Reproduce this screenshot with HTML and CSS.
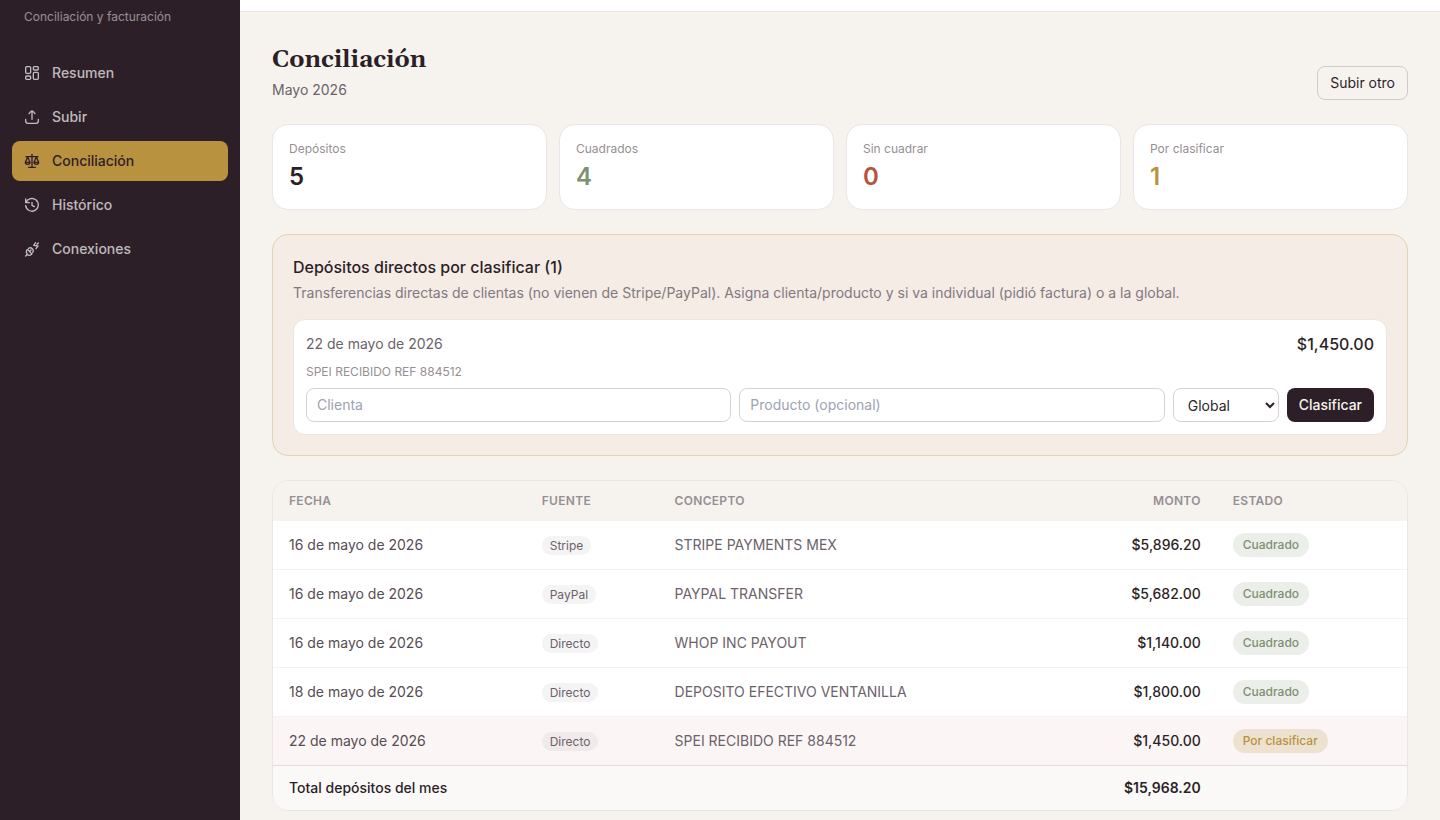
FILE: index.html
```html
<!DOCTYPE html>
<html lang="es">
<head>
<meta charset="utf-8">
<meta name="viewport" content="width=device-width, initial-scale=1">
<title>Conciliación</title>
<link rel="stylesheet" href="styles.css">
</head>
<body>
<div class="app">
  <aside class="sidebar">
    <p class="tagline">Conciliación y facturación</p>
    <nav class="nav">
      <a class="nav-link" href="#resumen"><svg class="icon" viewBox="0 0 24 24"><rect x="2.500" y="2.500" width="7.500" height="10" rx="1.500"/><rect x="2.500" y="16.500" width="7.500" height="5" rx="1.500"/><rect x="14" y="2.500" width="7.500" height="5" rx="1.500"/><rect x="14" y="11" width="7.500" height="10.500" rx="1.500"/></svg>Resumen</a>
      <a class="nav-link" href="#subir"><svg class="icon" viewBox="0 0 24 24"><path d="M12 15.500V3M7.500 7C9 5 11 3 12 3s3 2 4.500 4M2.500 15.500V18c0 2.500 1 3.500 3.500 3.500h12c2.500 0 3.500-1 3.500-3.500v-2.500"/></svg>Subir</a>
      <a class="nav-link nav-link-active" href="#conciliacion" aria-current="page"><svg class="icon" viewBox="0 0 24 24"><path d="M12 2v19M7 21.500h10M3 5.500h18M5.500 6 2 14h7zM18.500 6 15 14h7zM2 14c0 4 7 4 7 0M15 14c0 4 7 4 7 0"/></svg>Conciliación</a>
      <a class="nav-link" href="#historico"><svg class="icon" viewBox="0 0 24 24"><path d="M2.500 3v5.500H8M3 8.500a9.500 9.500 0 1 1-.5 4.500M12 8v4.500l3.500 2"/></svg>Histórico</a>
      <a class="nav-link" href="#conexiones"><svg class="icon" viewBox="0 0 24 24"><path d="M5 12.500l7 7c-2.500 2.500-5.500 2.500-7 .5s-2-5 0-7.500zM5 20l-2.500 2.500M8.500 15.500l2-2M7 11c2-1.500 4-1 5.500.5s2 3.500.5 5.500M17.500 2.500 14.500 6.500l6.500 1-3 4M21.500 3l-2 2"/></svg>Conexiones</a>
    </nav>
  </aside>
  <div class="content">
    <header class="topbar"></header>
    <main class="main">
      <div class="page-head">
        <div>
          <h1 class="page-title">Conciliación</h1>
          <p class="page-sub">Mayo 2026</p>
        </div>
        <button class="btn btn-outline" type="button">Subir otro</button>
      </div>
      <section class="stats" aria-label="Totales">
        <div class="stat"><p class="stat-label">Depósitos</p><p class="stat-value">5</p></div>
        <div class="stat"><p class="stat-label">Cuadrados</p><p class="stat-value value-green">4</p></div>
        <div class="stat"><p class="stat-label">Sin cuadrar</p><p class="stat-value value-red">0</p></div>
        <div class="stat"><p class="stat-label">Por clasificar</p><p class="stat-value value-gold">1</p></div>
      </section>
      <section class="pending">
        <h2 class="pending-title">Depósitos directos por clasificar (1)</h2>
        <p class="pending-text">Transferencias directas de clientas (no vienen de Stripe/PayPal). Asigna clienta/producto y si va individual (pidió factura) o a la global.</p>
        <form class="deposit">
          <div class="deposit-head"><span class="deposit-date">22 de mayo de 2026</span><span class="deposit-amount">$1,450.00</span></div>
          <p class="deposit-ref">SPEI RECIBIDO REF 884512</p>
          <div class="deposit-fields">
            <input class="field" type="text" placeholder="Clienta" aria-label="Clienta">
            <input class="field" type="text" placeholder="Producto (opcional)" aria-label="Producto">
            <select class="select" aria-label="Tipo de factura"><option>Global</option><option>Individual</option></select>
            <button class="btn btn-dark" type="button">Clasificar</button>
          </div>
        </form>
      </section>
      <div class="table-card">
        <table class="table">
          <thead>
            <tr><th>Fecha</th><th>Fuente</th><th>Concepto</th><th class="num">Monto</th><th>Estado</th></tr>
          </thead>
          <tbody>
            <tr><td>16 de mayo de 2026</td><td><span class="tag">Stripe</span></td><td class="concept">STRIPE PAYMENTS MEX</td><td class="num amount">$5,896.20</td><td><span class="badge badge-green">Cuadrado</span></td></tr>
            <tr><td>16 de mayo de 2026</td><td><span class="tag">PayPal</span></td><td class="concept">PAYPAL TRANSFER</td><td class="num amount">$5,682.00</td><td><span class="badge badge-green">Cuadrado</span></td></tr>
            <tr><td>16 de mayo de 2026</td><td><span class="tag">Directo</span></td><td class="concept">WHOP INC PAYOUT</td><td class="num amount">$1,140.00</td><td><span class="badge badge-green">Cuadrado</span></td></tr>
            <tr><td>18 de mayo de 2026</td><td><span class="tag">Directo</span></td><td class="concept">DEPOSITO EFECTIVO VENTANILLA</td><td class="num amount">$1,800.00</td><td><span class="badge badge-green">Cuadrado</span></td></tr>
            <tr class="row-pending"><td>22 de mayo de 2026</td><td><span class="tag">Directo</span></td><td class="concept">SPEI RECIBIDO REF 884512</td><td class="num amount">$1,450.00</td><td><span class="badge badge-gold">Por clasificar</span></td></tr>
          </tbody>
          <tfoot>
            <tr><td colspan="3">Total depósitos del mes</td><td class="num total">$15,968.20</td><td></td></tr>
          </tfoot>
        </table>
      </div>
    </main>
  </div>
</div>
</body>
</html>
```
FILE: styles.css
```css
*, *::before, *::after { box-sizing: border-box; }
:root {
  --ink: #2d1f28;
  --gold: #b8923f;
  --green: #7d9071;
  --red: #b5533c;
  --cream: #f6f3ee;
}
body {
  margin: 0;
  background: var(--cream);
  color: var(--ink);
  font-family: Inter, "Liberation Sans", sans-serif;
  font-size: 14px;
  line-height: 20px;
}
h1, h2, p { margin: 0; }
button, input, select { font: inherit; color: inherit; }

.app { display: flex; min-height: 100vh; }
.sidebar { flex: 0 0 240px; padding: 9px 12px; background: var(--ink); }
.tagline { padding: 0 12px; font-size: 12px; line-height: 16px; color: rgba(255, 255, 255, 0.5); }
.nav { display: flex; flex-direction: column; gap: 4px; margin-top: 28px; }
.nav-link {
  display: flex;
  align-items: center;
  gap: 12px;
  height: 40px;
  padding: 0 12px;
  border-radius: 8px;
  color: rgba(255, 255, 255, 0.7);
  font-weight: 500;
  text-decoration: none;
}
.nav-link-active { background: var(--gold); color: var(--ink); }
.icon { width: 16px; height: 16px; fill: none; stroke: currentColor; stroke-width: 2; stroke-linecap: round; stroke-linejoin: round; }

.content { flex: 1; min-width: 0; }
.topbar { height: 12px; background: #fff; border-bottom: 1px solid #e8e6e6; }
.main { padding: 32px 32px 9px; }
.page-head { display: flex; align-items: flex-end; justify-content: space-between; }
.page-title { font-family: Georgia, Gelasio, "Liberation Serif", serif; font-size: 24px; line-height: 32px; font-weight: 700; }
.page-sub { margin-top: 4px; color: #6c626a; }

.btn { height: 34px; padding: 0 12px; border-radius: 8px; cursor: pointer; }
.btn-outline { background: transparent; border: 1px solid #d0cbc9; }
.btn-dark { background: var(--ink); border: 0; color: var(--cream); font-weight: 500; }

.stats { display: grid; grid-template-columns: repeat(4, 1fr); gap: 12px; margin-top: 24px; }
.stat { height: 86px; padding: 16px; background: #fff; border: 1px solid #e8e6e6; border-radius: 16px; }
.stat-label { font-size: 12px; line-height: 16px; color: #968f93; }
.stat-value { margin-top: 4px; font-size: 24px; line-height: 32px; font-weight: 600; }
.value-green { color: var(--green); }
.value-red { color: var(--red); }
.value-gold { color: var(--gold); }

.pending { margin-top: 24px; padding: 20px; background: #f4ece5; border: 1px solid #e3d3b3; border-radius: 16px; }
.pending-title { font-size: 16px; line-height: 24px; font-weight: 500; }
.pending-text { margin-top: 4px; color: #817980; }
.deposit { margin-top: 16px; padding: 12px; background: #fff; border: 1px solid #e8e6e6; border-radius: 12px; }
.deposit-head { display: flex; justify-content: space-between; align-items: center; }
.deposit-date { color: #6c626a; }
.deposit-amount { font-size: 16px; line-height: 24px; font-weight: 500; }
.deposit-ref { margin-top: 8px; font-size: 12px; line-height: 16px; color: #968f93; }
.deposit-fields { display: flex; gap: 8px; margin-top: 8px; }
.field { flex: 1; min-width: 0; height: 34px; padding: 5px 10px 7px; background: #fff; border: 1px solid #d5d2d4; border-radius: 8px; }
.field::placeholder { color: #9ca3af; opacity: 1; }
.select { width: 106px; height: 34px; padding: 0 0 0 10px; background: #fff; border: 1px solid #d5d2d4; border-radius: 8px; }

.table-card { margin-top: 24px; background: #fff; border: 1px solid #e8e6e6; border-radius: 16px; overflow: hidden; }
.table { width: 100%; border-collapse: separate; border-spacing: 0; }
.table th { height: 40px; padding: 0 16px; background: var(--cream); color: #968f93; font-size: 12px; line-height: 16px; font-weight: 600; letter-spacing: 0.025em; text-align: left; text-transform: uppercase; }
.table td { height: 49px; padding: 0 16px; color: #574c53; }
.table tbody td { border-bottom: 1px solid #f4f3f3; }
.table .concept { color: #6c626a; }
.table .num { text-align: right; }
.table .amount { color: var(--ink); font-weight: 500; }
.table .row-pending td { background: #fbf5f5; border-bottom-color: #e2dddd; }
.table tfoot td { height: 44px; background: #faf9f7; color: var(--ink); font-weight: 500; }
.table tfoot .total { font-weight: 600; }
.tag { display: inline-block; padding: 2px 8px; border-radius: 10px; background: rgba(45, 31, 40, 0.05); color: #6c626a; font-size: 12px; line-height: 15px; }
.badge { display: inline-block; padding: 4px 10px; border-radius: 12px; font-size: 12px; line-height: 16px; font-weight: 500; }
.badge-green { background: #ebeee9; color: var(--green); }
.badge-gold { background: #ede1cf; color: var(--gold); }
```
